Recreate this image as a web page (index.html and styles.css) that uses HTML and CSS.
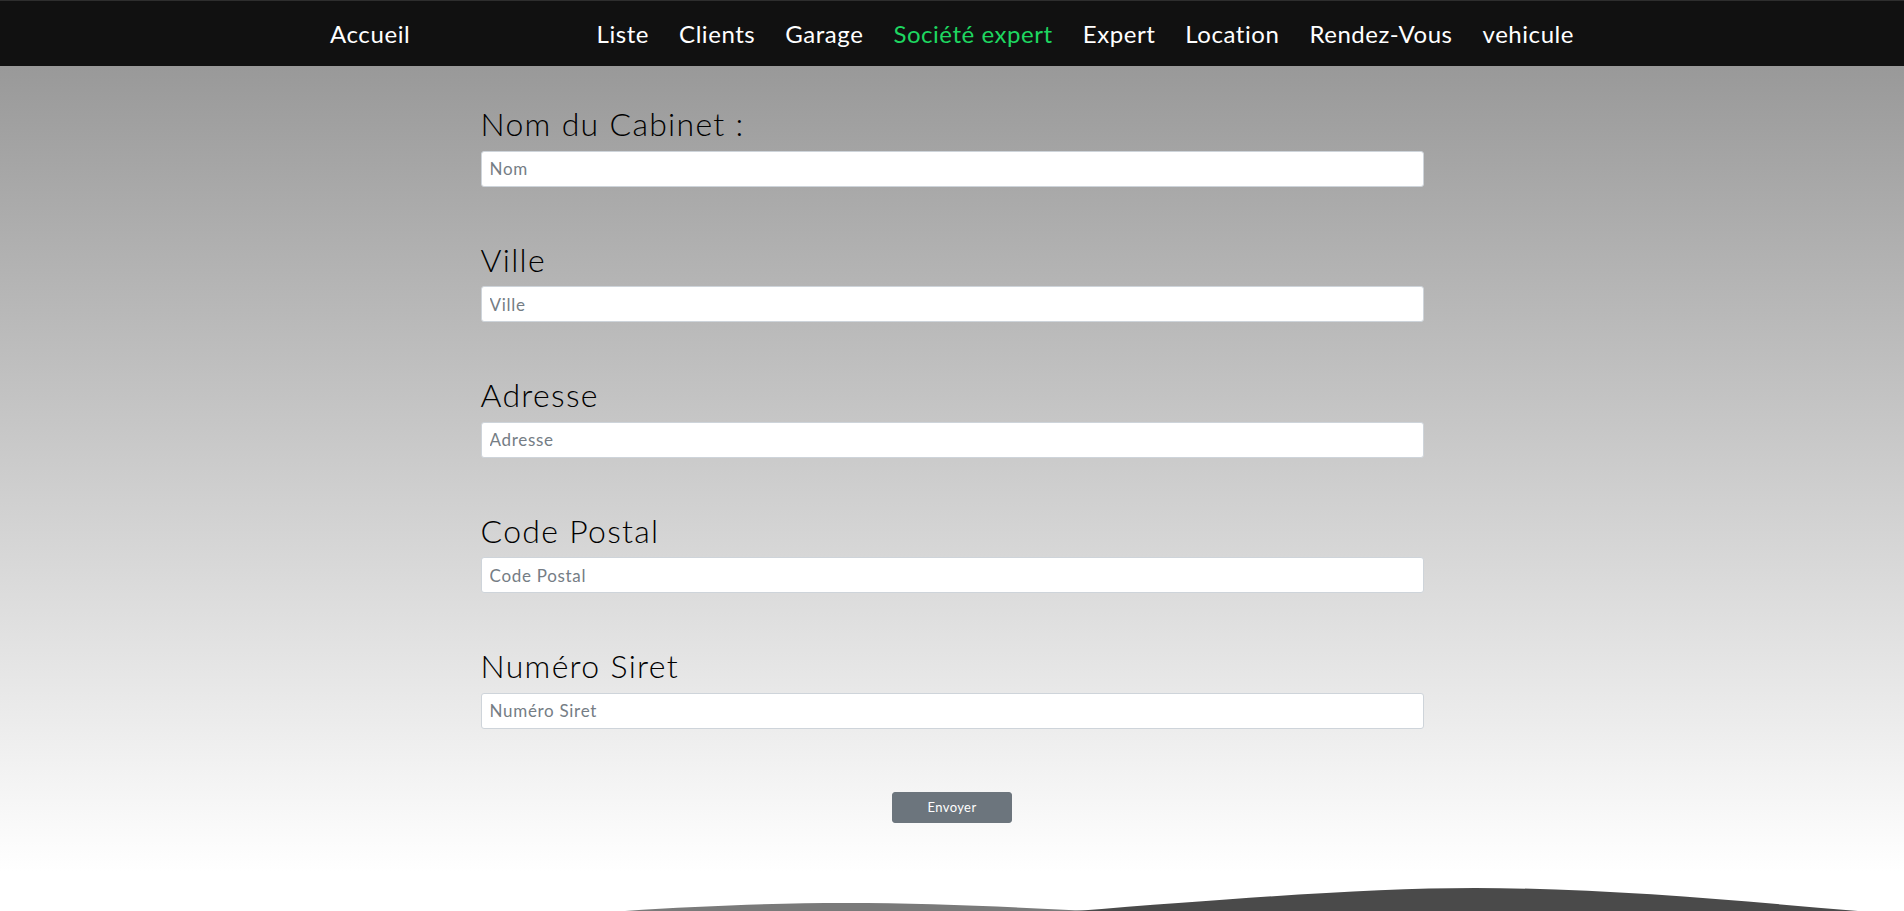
FILE: index.html
```html
<!DOCTYPE html>
<html lang="fr">
<head>
<meta charset="utf-8">
<title>Société expert</title>
<link rel="stylesheet" href="styles.css">
</head>
<body>
<nav class="navbar">
  <div class="nav-inner">
    <a class="brand" href="#">Accueil</a>
    <ul class="nav-links">
      <li><a href="#">Liste</a></li>
      <li><a href="#">Clients</a></li>
      <li><a href="#">Garage</a></li>
      <li><a href="#" class="active">Société expert</a></li>
      <li><a href="#">Expert</a></li>
      <li><a href="#">Location</a></li>
      <li><a href="#">Rendez-Vous</a></li>
      <li><a href="#">vehicule</a></li>
    </ul>
  </div>
</nav>
<main class="main">
  <form class="form">
    <div class="group">
      <label class="label" for="nom">Nom du Cabinet :</label>
      <input class="input" id="nom" type="text" placeholder="Nom">
    </div>
    <div class="group">
      <label class="label" for="ville">Ville</label>
      <input class="input" id="ville" type="text" placeholder="Ville">
    </div>
    <div class="group">
      <label class="label" for="adresse">Adresse</label>
      <input class="input" id="adresse" type="text" placeholder="Adresse">
    </div>
    <div class="group">
      <label class="label" for="cp">Code Postal</label>
      <input class="input" id="cp" type="text" placeholder="Code Postal">
    </div>
    <div class="group">
      <label class="label" for="siret">Numéro Siret</label>
      <input class="input" id="siret" type="text" placeholder="Numéro Siret">
    </div>
    <div class="actions">
      <button class="btn" type="submit">Envoyer</button>
    </div>
  </form>
</main>
<footer class="footer">
  <svg class="wave" viewBox="0 0 1904 23" preserveAspectRatio="none" aria-hidden="true">
    <path d="M625 23 C700 18 780 15 844 15 C930 15 1010 19 1090 23 Z" fill="#7a7a7a"/>
    <path d="M1075 23 C1240 10 1370 0 1475 0 C1600 0 1730 12 1858 23 Z" fill="#4a4a4a"/>
  </svg>
</footer>
</body>
</html>
```
FILE: styles.css
```css
* { box-sizing: border-box; }
html, body { margin: 0; padding: 0; }
body {
  font-family: Lato, "Noto Sans", sans-serif;
  background: #fff;
  color: #111;
  height: 100vh;
  display: flex;
  flex-direction: column;
  overflow: hidden;
}
.navbar {
  background: #111;
  border-top: 1px solid #2e2e2e;
  height: 66px;
  flex: 0 0 66px;
  display: flex;
  align-items: center;
}
.nav-inner {
  width: 1244px;
  margin: 0 auto;
  display: flex;
  justify-content: space-between;
  align-items: center;
}
.brand {
  color: #fff;
  text-decoration: none;
  font-size: 24px;
  letter-spacing: 0.6px;
}
.nav-links {
  list-style: none;
  margin: 0;
  padding: 0;
  display: flex;
  gap: 30px;
}
.nav-links a {
  color: #fff;
  text-decoration: none;
  font-size: 24px;
  letter-spacing: 0.55px;
}
.nav-links a.active { color: #1ed760; }
.main {
  flex: 1;
  background: linear-gradient(to bottom, #999999 0%, #ffffff 98%);
  padding-top: 39px;
}
.form {
  width: 943px;
  margin: 0 auto;
}
.group {
  display: flex;
  flex-direction: column;
  margin-bottom: 54px;
}
.label {
  font-size: 32px;
  font-weight: 300;
  line-height: 38.5px;
  letter-spacing: 1.3px;
  color: #000;
  margin-bottom: 7px;
}
.input {
  height: 36px;
  width: 100%;
  border: 1px solid #ced4da;
  border-radius: 3px;
  background: #fff;
  padding: 0 8px;
  font-family: inherit;
  font-size: 17px;
  letter-spacing: 0.7px;
  color: #212529;
}
.input::placeholder { color: #757d85; }
.actions {
  display: flex;
  justify-content: center;
  padding-top: 9px;
}
.btn {
  width: 120px;
  height: 31px;
  background: #6c757d;
  color: #fff;
  border: 1px solid #6c757d;
  border-radius: 3px;
  font-family: inherit;
  font-size: 13px;
  letter-spacing: 0.4px;
}
.footer {
  height: 23px;
  flex: 0 0 23px;
  background: #fff;
}
.wave {
  display: block;
  width: 100%;
  height: 23px;
}
```
